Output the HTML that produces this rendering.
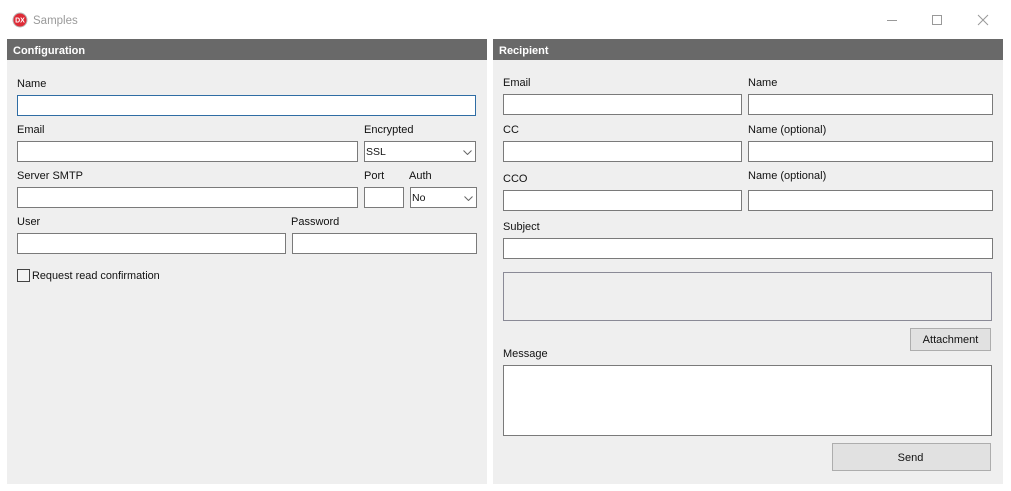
<!DOCTYPE html>
<html><head><meta charset="utf-8"><style>
html,body{margin:0;padding:0;width:1011px;height:491px;background:#fff;overflow:hidden}
body{position:relative;font-family:"Liberation Sans",sans-serif;font-size:11px;color:#111}
div,span,svg{position:absolute;box-sizing:border-box}
.p{background:#efefef;top:39px;height:445px}
.h{background:#696969;top:39px;height:21px;color:#fff;font-weight:bold;font-size:11px;line-height:22px;padding-top:1px;padding-left:6px}
.l{white-space:nowrap;line-height:14px}
.i{background:#fff;border:1px solid #7a7a7a}
.b{background:#e1e1e1;border:1px solid #adadad;text-align:center;white-space:nowrap}
</style></head><body>
<svg style="left:12px;top:12px" width="16" height="16" viewBox="0 0 16 16"><circle cx="8" cy="8" r="7.5" fill="#b9b9b9"/><circle cx="8" cy="8" r="6.5" fill="#de2a36"/><text x="8" y="10.5" font-size="7" font-weight="bold" fill="#fff" text-anchor="middle" font-family="Liberation Sans">DX</text></svg>
<div class="l" style="left:33px;top:14px;font-size:11.5px;color:#9a9a9a">Samples</div>
<div style="left:887px;top:20px;width:10px;height:1px;background:#999"></div>
<div style="left:932px;top:15px;width:10px;height:10px;border:1px solid #999"></div>
<svg style="left:977px;top:14px" width="12" height="12" viewBox="0 0 12 12"><path d="M1 1L11 11M11 1L1 11" stroke="#999" stroke-width="1" fill="none"/></svg>

<div class="p" style="left:7px;width:480px"></div>
<div class="p" style="left:493px;width:510px"></div>
<div class="h" style="left:7px;width:480px">Configuration</div>
<div class="h" style="left:493px;width:510px">Recipient</div>

<div class="l" style="left:17px;top:77px">Name</div>
<div class="i" style="left:17px;top:95px;width:459px;height:21px;border-color:#2f6da4"></div>
<div class="l" style="left:17px;top:123px">Email</div>
<div class="i" style="left:17px;top:141px;width:341px;height:21px"></div>
<div class="l" style="left:364px;top:123px">Encrypted</div>
<div class="i" style="left:364px;top:141px;width:112px;height:21px;padding-left:1px;padding-top:1px;line-height:19px;font-size:10.5px">SSL<svg style="left:98px;top:8px" width="9" height="5" viewBox="0 0 9 5"><path d="M0.5 0.5L4.5 4.5L8.5 0.5" stroke="#666" fill="none"/></svg></div>
<div class="l" style="left:17px;top:169px">Server SMTP</div>
<div class="i" style="left:17px;top:187px;width:341px;height:21px"></div>
<div class="l" style="left:364px;top:169px">Port</div>
<div class="i" style="left:364px;top:187px;width:40px;height:21px"></div>
<div class="l" style="left:409px;top:169px">Auth</div>
<div class="i" style="left:410px;top:187px;width:67px;height:21px;padding-left:1px;padding-top:1px;line-height:19px;font-size:10.5px">No<svg style="left:53px;top:8px" width="9" height="5" viewBox="0 0 9 5"><path d="M0.5 0.5L4.5 4.5L8.5 0.5" stroke="#666" fill="none"/></svg></div>
<div class="l" style="left:17px;top:215px">User</div>
<div class="i" style="left:17px;top:233px;width:269px;height:21px"></div>
<div class="l" style="left:291px;top:215px">Password</div>
<div class="i" style="left:292px;top:233px;width:185px;height:21px"></div>
<div style="left:17px;top:269px;width:13px;height:13px;background:#f4f4f4;border:1px solid #444"></div>
<div class="l" style="left:32px;top:269px;font-size:10.9px">Request read confirmation</div>

<div class="l" style="left:503px;top:76px">Email</div>
<div class="i" style="left:503px;top:94px;width:239px;height:21px"></div>
<div class="l" style="left:748px;top:76px">Name</div>
<div class="i" style="left:748px;top:94px;width:245px;height:21px"></div>
<div class="l" style="left:503px;top:123px">CC</div>
<div class="i" style="left:503px;top:141px;width:239px;height:21px"></div>
<div class="l" style="left:748px;top:123px">Name (optional)</div>
<div class="i" style="left:748px;top:141px;width:245px;height:21px"></div>
<div class="l" style="left:503px;top:172px">CCO</div>
<div class="i" style="left:503px;top:190px;width:239px;height:21px"></div>
<div class="l" style="left:748px;top:169px">Name (optional)</div>
<div class="i" style="left:748px;top:190px;width:245px;height:21px"></div>
<div class="l" style="left:503px;top:220px">Subject</div>
<div class="i" style="left:503px;top:238px;width:490px;height:21px"></div>
<div style="left:503px;top:272px;width:489px;height:49px;background:#efefef;border:1px solid #8a8a96"></div>
<div class="b" style="left:910px;top:328px;width:81px;height:23px;line-height:22px">Attachment</div>
<div class="l" style="left:503px;top:347px">Message</div>
<div class="i" style="left:503px;top:365px;width:489px;height:71px"></div>
<div class="b" style="left:832px;top:443px;width:159px;height:28px;line-height:28px;padding-right:2px">Send</div>
</body></html>
